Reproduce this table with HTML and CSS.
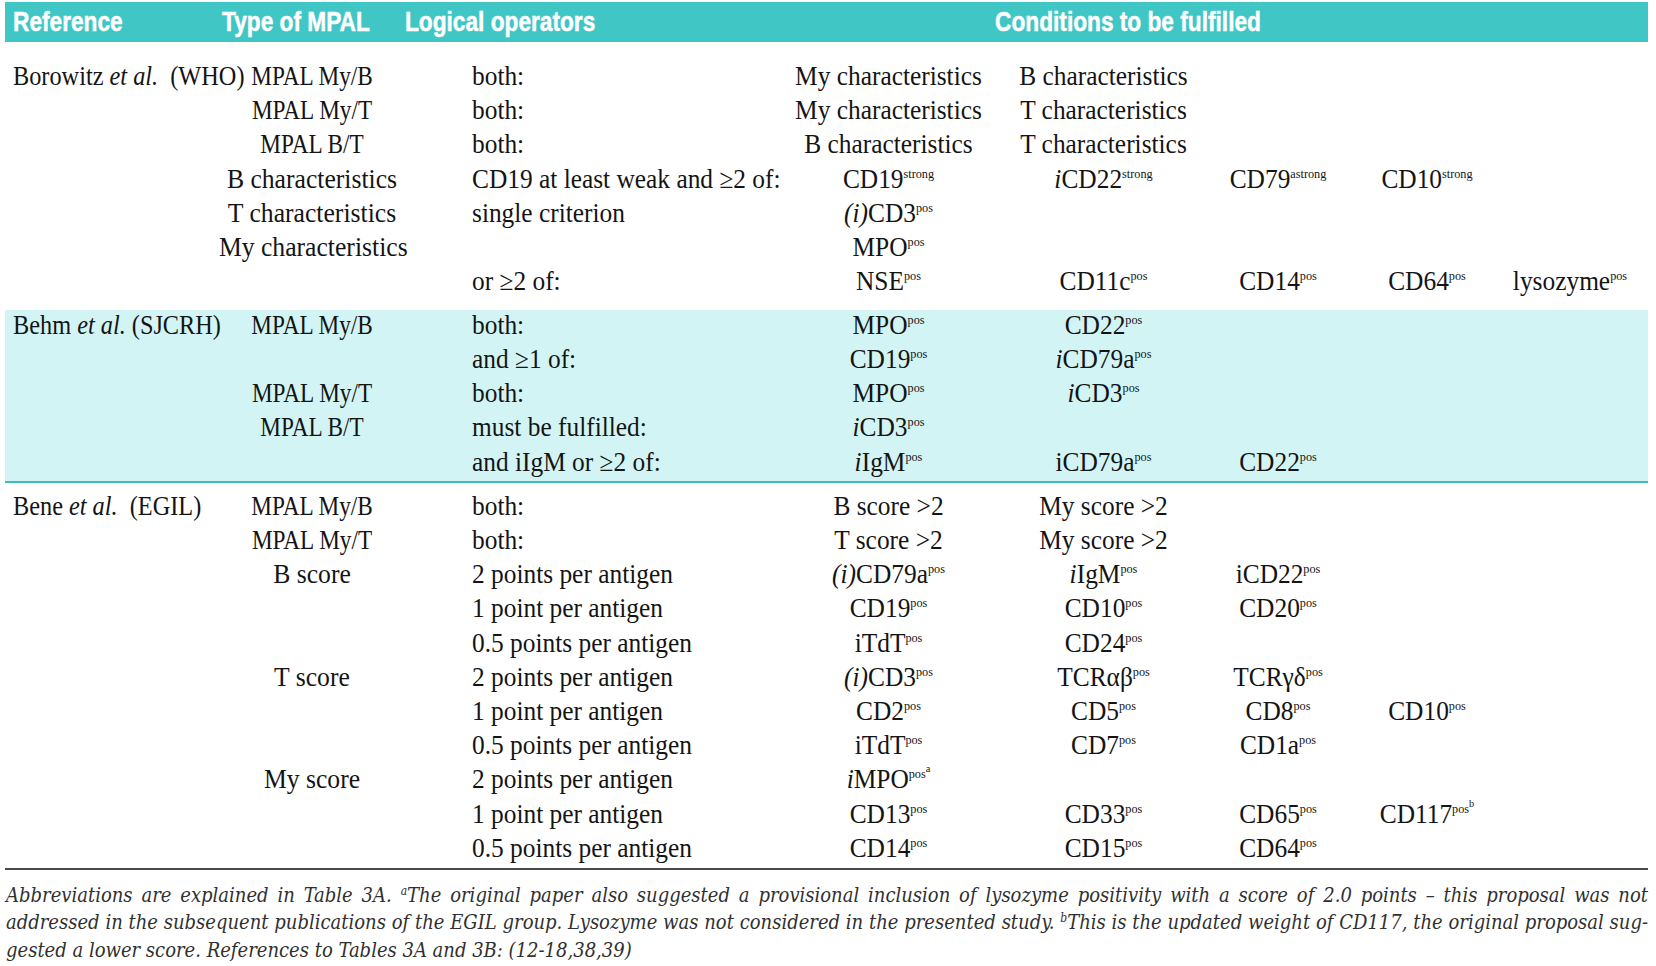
FILE: index.html
```html
<!DOCTYPE html>
<html lang="en">
<head>
<meta charset="utf-8">
<title>MPAL criteria</title>
<link rel="stylesheet" href="styles.css">
</head>
<body>
<div class="page">
  <div class="head">
    <div class="h h-ref">Reference</div>
    <div class="h h-type">Type of MPAL</div>
    <div class="h h-op">Logical operators</div>
    <div class="h h-cond">Conditions to be fulfilled</div>
  </div>

  <div class="sec sec1">
    <div class="row"><div class="ref">Borowitz <i>et al.</i>&nbsp; (WHO)</div><div class="typ mp">MPAL My/B</div><div class="op">both:</div><div class="cd">My characteristics</div><div class="cd">B characteristics</div><div></div><div></div><div></div></div>
    <div class="row"><div class="ref"></div><div class="typ mp">MPAL My/T</div><div class="op">both:</div><div class="cd">My characteristics</div><div class="cd">T characteristics</div><div></div><div></div><div></div></div>
    <div class="row"><div class="ref"></div><div class="typ mp">MPAL B/T</div><div class="op">both:</div><div class="cd">B characteristics</div><div class="cd">T characteristics</div><div></div><div></div><div></div></div>
    <div class="row"><div class="ref"></div><div class="typ">B characteristics</div><div class="op">CD19 at least weak and ≥2 of:</div><div class="cd">CD19<sup class="s">strong</sup></div><div class="cd"><i>i</i>CD22<sup class="s">strong</sup></div><div class="cd">CD79<sup class="s">astrong</sup></div><div class="cd">CD10<sup class="s">strong</sup></div><div></div></div>
    <div class="row"><div class="ref"></div><div class="typ">T characteristics</div><div class="op">single criterion</div><div class="cd"><i>(i)</i>CD3<sup class="s">pos</sup></div><div></div><div></div><div></div><div></div></div>
    <div class="row"><div class="ref"></div><div class="typ">My characteristics</div><div class="op"></div><div class="cd">MPO<sup class="s">pos</sup></div><div></div><div></div><div></div><div></div></div>
    <div class="row"><div class="ref"></div><div class="typ"></div><div class="op">or ≥2 of:</div><div class="cd">NSE<sup class="s">pos</sup></div><div class="cd">CD11c<sup class="s">pos</sup></div><div class="cd">CD14<sup class="s">pos</sup></div><div class="cd">CD64<sup class="s">pos</sup></div><div class="cd">lysozyme<sup class="s">pos</sup></div></div>
  </div>

  <div class="sec sec2">
    <div class="row"><div class="ref">Behm <i>et al.</i> (SJCRH)</div><div class="typ mp">MPAL My/B</div><div class="op">both:</div><div class="cd">MPO<sup class="s">pos</sup></div><div class="cd">CD22<sup class="s">pos</sup></div><div></div><div></div><div></div></div>
    <div class="row"><div class="ref"></div><div class="typ"></div><div class="op">and ≥1 of:</div><div class="cd">CD19<sup class="s">pos</sup></div><div class="cd"><i>i</i>CD79a<sup class="s">pos</sup></div><div></div><div></div><div></div></div>
    <div class="row"><div class="ref"></div><div class="typ mp">MPAL My/T</div><div class="op">both:</div><div class="cd">MPO<sup class="s">pos</sup></div><div class="cd"><i>i</i>CD3<sup class="s">pos</sup></div><div></div><div></div><div></div></div>
    <div class="row"><div class="ref"></div><div class="typ mp">MPAL B/T</div><div class="op">must be fulfilled:</div><div class="cd"><i>i</i>CD3<sup class="s">pos</sup></div><div></div><div></div><div></div><div></div></div>
    <div class="row"><div class="ref"></div><div class="typ"></div><div class="op">and iIgM or ≥2 of:</div><div class="cd"><i>i</i>IgM<sup class="s">pos</sup></div><div class="cd">iCD79a<sup class="s">pos</sup></div><div class="cd">CD22<sup class="s">pos</sup></div><div></div><div></div></div>
  </div>

  <div class="sec sec3">
    <div class="row"><div class="ref">Bene <i>et al.</i>&nbsp; (EGIL)</div><div class="typ mp">MPAL My/B</div><div class="op">both:</div><div class="cd">B score &gt;2</div><div class="cd">My score &gt;2</div><div></div><div></div><div></div></div>
    <div class="row"><div class="ref"></div><div class="typ mp">MPAL My/T</div><div class="op">both:</div><div class="cd">T score &gt;2</div><div class="cd">My score &gt;2</div><div></div><div></div><div></div></div>
    <div class="row"><div class="ref"></div><div class="typ">B score</div><div class="op">2 points per antigen</div><div class="cd"><i>(i)</i>CD79a<sup class="s">pos</sup></div><div class="cd"><i>i</i>IgM<sup class="s">pos</sup></div><div class="cd">iCD22<sup class="s">pos</sup></div><div></div><div></div></div>
    <div class="row"><div class="ref"></div><div class="typ"></div><div class="op">1 point per antigen</div><div class="cd">CD19<sup class="s">pos</sup></div><div class="cd">CD10<sup class="s">pos</sup></div><div class="cd">CD20<sup class="s">pos</sup></div><div></div><div></div></div>
    <div class="row"><div class="ref"></div><div class="typ"></div><div class="op">0.5 points per antigen</div><div class="cd">iTdT<sup class="s">pos</sup></div><div class="cd">CD24<sup class="s">pos</sup></div><div></div><div></div><div></div></div>
    <div class="row"><div class="ref"></div><div class="typ">T score</div><div class="op">2 points per antigen</div><div class="cd"><i>(i)</i>CD3<sup class="s">pos</sup></div><div class="cd">TCRαβ<sup class="s">pos</sup></div><div class="cd">TCRγδ<sup class="s">pos</sup></div><div></div><div></div></div>
    <div class="row"><div class="ref"></div><div class="typ"></div><div class="op">1 point per antigen</div><div class="cd">CD2<sup class="s">pos</sup></div><div class="cd">CD5<sup class="s">pos</sup></div><div class="cd">CD8<sup class="s">pos</sup></div><div class="cd">CD10<sup class="s">pos</sup></div><div></div></div>
    <div class="row"><div class="ref"></div><div class="typ"></div><div class="op">0.5 points per antigen</div><div class="cd">iTdT<sup class="s">pos</sup></div><div class="cd">CD7<sup class="s">pos</sup></div><div class="cd">CD1a<sup class="s">pos</sup></div><div></div><div></div></div>
    <div class="row"><div class="ref"></div><div class="typ">My score</div><div class="op">2 points per antigen</div><div class="cd"><i>i</i>MPO<sup class="s">pos<sup class="s2">a</sup></sup></div><div></div><div></div><div></div><div></div></div>
    <div class="row"><div class="ref"></div><div class="typ"></div><div class="op">1 point per antigen</div><div class="cd">CD13<sup class="s">pos</sup></div><div class="cd">CD33<sup class="s">pos</sup></div><div class="cd">CD65<sup class="s">pos</sup></div><div class="cd">CD117<sup class="s">pos<sup class="s2">b</sup></sup></div><div></div></div>
    <div class="row"><div class="ref"></div><div class="typ"></div><div class="op">0.5 points per antigen</div><div class="cd">CD14<sup class="s">pos</sup></div><div class="cd">CD15<sup class="s">pos</sup></div><div class="cd">CD64<sup class="s">pos</sup></div><div></div><div></div></div>
  </div>

  <div class="notes">
    <div class="ln ln-j">Abbreviations are explained in Table 3A. <sup class="fs">a</sup>The original paper also suggested a provisional inclusion of lysozyme positivity with a score of 2.0 points – this proposal was not</div>
    <div class="ln ln-j">addressed in the subsequent publications of the EGIL group. Lysozyme was not considered in the presented study. <sup class="fs">b</sup>This is the updated weight of CD117, the original proposal sug-</div>
    <div class="ln">gested a lower score. References to Tables 3A and 3B: (12-18,38,39)</div>
  </div>
</div>
</body>
</html>
```

FILE: styles.css
```css
html, body {
  margin: 0;
  padding: 0;
  background: #ffffff;
}

.page {
  width: 1643px;
  padding: 2px 0 0 5px;
  font-family: "Liberation Serif", "Times New Roman", serif;
  font-size: 27px;
  color: #141414;
}

/* header bar */
.head {
  display: grid;
  grid-template-columns: 217px 183px 203px 1040px;
  height: 40px;
  align-items: center;
  background: #41c6c6;
  color: #ffffff;
  font-family: "Liberation Sans", Arial, sans-serif;
  font-weight: bold;
  font-size: 28px;
  -webkit-text-stroke: 0.5px #ffffff;
}

.h {
  white-space: nowrap;
  line-height: 40px;
  transform: scaleX(0.81);
  transform-origin: 0 50%;
}
.h-ref { padding-left: 8px; transform-origin: 8px 50%; }
.h-cond { text-align: center; transform-origin: 50% 50%; }

/* sections */
.sec { display: flex; flex-direction: column; }

.sec1 { padding: 17px 0 11.6px; }

.sec2 {
  background: #d3f4f4;
  border-bottom: 2px solid #3fbdbd;
}
.sec2 .row { line-height: 30px; }

.sec3 {
  padding: 6px 0 3px;
  border-bottom: 2px solid #4a4a4a;
}

.row {
  display: grid;
  grid-template-columns: 209px 196px 382px 193px 237px 112px 186px 100px 28px;
  height: 34.2px;
  line-height: 34px;
  white-space: nowrap;
}

.row > div {
  transform: scaleX(0.94);
  transform-origin: 50% 50%;
}

.ref { padding-left: 8px; }
.row > .ref { transform: scaleX(0.9); transform-origin: 8px 50%; }
.typ { text-align: center; }
.row > .typ { transform: scaleX(0.95); }
.row > .typ.mp { transform: scaleX(0.86); }
.op { padding-left: 62px; }
.row > .op { transform-origin: 62px 50%; }
.cd { text-align: center; margin: 0 -24px; }

.s {
  font-size: 13px;
  line-height: 0;
  vertical-align: 10px;
}

.s2 {
  font-size: 11px;
  line-height: 0;
  vertical-align: 6px;
}

/* footnote */
.notes {
  padding: 12px 0 0 1px;
  font-family: "DejaVu Serif Condensed", "DejaVu Serif", serif;
  font-style: italic;
  font-size: 20px;
  color: #303030;
}

.ln {
  height: 27.5px;
  line-height: 27.5px;
  white-space: nowrap;
}

.ln-j {
  text-align: justify;
  text-align-last: justify;
}

.fs {
  font-size: 12px;
  line-height: 0;
  vertical-align: 7px;
}
```
